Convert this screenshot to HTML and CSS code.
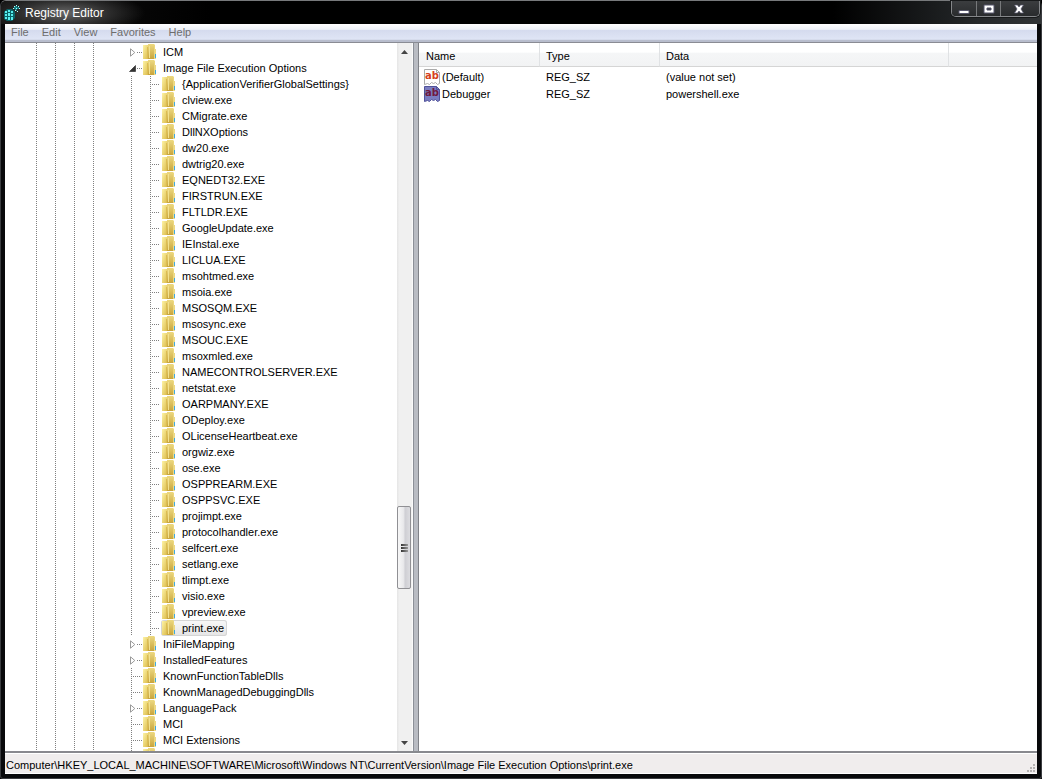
FILE: index.html
```html
<!DOCTYPE html>
<html lang="en">
<head>
<meta charset="utf-8">
<title>Registry Editor</title>
<link rel="stylesheet" href="styles.css">
</head>
<body>
<svg class="defs" aria-hidden="true">
  <defs>
    <linearGradient id="gold" x1="0" x2="1" y1="0" y2="1">
      <stop offset="0" stop-color="#fdf3a6"/><stop offset="1" stop-color="#dcbc4c"/>
    </linearGradient>
    <linearGradient id="goldDark" x1="0" x2="0" y1="0" y2="1">
      <stop offset="0" stop-color="#ead57c"/><stop offset="1" stop-color="#c9a53c"/>
    </linearGradient>
    <symbol id="folder" viewBox="0 0 14 16">
      <path d="M5 0h6l1 1v4h1v10H5z" fill="#ecd77c"/>
      <path d="M8 1h3v14H8z" fill="url(#goldDark)"/>
      <path d="M11 5h2v10h-2z" fill="#ecd883"/>
      <path d="M12 10h1v4h-1z" fill="#3fa9df"/>
      <path d="M0 1h5v14H0z" fill="url(#gold)"/>
      <path d="M4 3h1v12H4z" fill="#dcbd52"/>
      <path d="M5 1h3l1 1v13H5z" fill="url(#goldDark)"/>
      <path d="M6 2h1v12H6z" fill="#f3e28f"/>
    </symbol>
    <symbol id="closed" viewBox="0 0 7 9">
      <path d="M1.500.8v7.400L5.800 4.500z" fill="#fff" stroke="#999"/>
    </symbol>
    <symbol id="open" viewBox="0 0 7 9">
      <path d="M6.500 1.500v6h-6z" fill="#333" stroke="#222" stroke-width=".6"/>
    </symbol>
    <symbol id="page" viewBox="0 0 16 16">
      <path d="M.5.5h12l3 3v11l-2 1-2-2-2 1-2-1-2 2-2-1-3 1z"/>
      <path d="M12.500.5v3h3" fill="none"/>
    </symbol>
  </defs>
</svg>
<div class="window">
  <header class="titlebar">
    <svg class="app-icon" viewBox="0 0 16 16" aria-hidden="true">
      <path d="M0 7l3-3h5l3 3v6l-3 3H3l-3-2z" fill="#0a6468"/>
      <path d="M1 6h2v2H1zM4 5h2v2H4zM7 6h2v2H7zM1 9h2v2H1zM4 8h2v3H4zM7 9h2v2H7zM1 12h2v2H1zM4 12h2v3H4zM7 12h2v3H7z" fill="#59eef0"/>
      <path d="M11 1h2v1h2v2h-2v2h-2V4h-1V2h1z" fill="#138084"/>
      <path d="M10 1h1v1h-1zM12 0h1v1h-1zM14 1h1v1h-1zM9 3h1v1H9zM12 3h1v1h-1zM15 3h1v1h-1zM11 5h1v1h-1zM13 6h1v1h-1z" fill="#b5ffff"/>
    </svg>
    <h1 class="title">Registry Editor</h1>
    <div class="controls">
      <button class="control" aria-label="Minimize"><svg viewBox="0 0 12 12"><path d="M1 7.500h10v3H1z" fill="#fff" stroke="#55556a"/></svg></button>
      <button class="control" aria-label="Maximize"><svg viewBox="0 0 12 12"><path fill-rule="evenodd" d="M1 2h10v8H1zM4 5v2h4V5z" fill="#fff" stroke="#55556a"/></svg></button>
      <button class="control close" aria-label="Close"><svg viewBox="0 0 12 12"><path d="M1.500 2h3L6 4l1.500-2h3L8 6l2.500 4h-3L6 8l-1.500 2h-3L4 6z" fill="#fff" stroke="#55556a" stroke-width=".7"/></svg></button>
    </div>
  </header>
  <nav class="menu">
    <button>File</button><button>Edit</button><button>View</button><button>Favorites</button><button>Help</button>
  </nav>
  <main class="panes">
    <section class="tree-pane">
      <ul class="tree" id="tree"></ul>
      <div class="scrollbar">
        <button class="arrow" aria-label="Scroll up"><svg viewBox="0 0 7 4"><path d="M0 4l3.500-4L7 4z" fill="#444"/></svg></button>
        <div class="track"><div class="thumb"><i></i><i></i><i></i></div></div>
        <button class="arrow" aria-label="Scroll down"><svg viewBox="0 0 7 4"><path d="M0 0l3.500 4L7 0z" fill="#444"/></svg></button>
      </div>
    </section>
    <div class="splitter"></div>
    <section class="values-pane">
      <table class="values">
        <colgroup><col class="c-name"><col class="c-type"><col class="c-data"><col></colgroup>
        <thead><tr><th>Name</th><th>Type</th><th>Data</th><th></th></tr></thead>
        <tbody>
          <tr>
            <td><span class="value"><span class="ab"><svg aria-hidden="true"><use href="#page"/></svg><b>ab</b></span>(Default)</span></td>
            <td>REG_SZ</td><td>(value not set)</td><td></td>
          </tr>
          <tr>
            <td><span class="value"><span class="ab selected"><svg aria-hidden="true"><use href="#page"/></svg><b>ab</b></span>Debugger</span></td>
            <td>REG_SZ</td><td>powershell.exe</td><td></td>
          </tr>
        </tbody>
      </table>
    </section>
  </main>
  <footer class="status">
    <span>Computer\HKEY_LOCAL_MACHINE\SOFTWARE\Microsoft\Windows NT\CurrentVersion\Image File Execution Options\print.exe</span>
    <svg class="grip" viewBox="0 0 9 9" aria-hidden="true"><path d="M6 0h2v2H6zM3 3h2v2H3zM6 3h2v2H6zM0 6h2v2H0zM3 6h2v2H3zM6 6h2v2H6z" fill="#b5b2b2"/></svg>
  </footer>
</div>
<script src="tree.js"></script>
</body>
</html>
```
FILE: styles.css
```css
* { box-sizing: border-box; }
body {
  margin: 0;
  font: 11px/16px "Liberation Sans", Arial, sans-serif;
  color: #000;
  background: #000;
}
button { font: inherit; border: 0; padding: 0; background: none; }
.defs { position: absolute; width: 0; height: 0; }
.window {
  display: flex;
  flex-direction: column;
  height: 100vh;
  padding: 0 4px 4px;
  background: #08090b;
  border: 1px solid #3b3d40;
  border-top-color: #77797b;
  border-radius: 6px 6px 3px 3px;
}
.titlebar {
  display: flex;
  flex: 0 0 23px;
  align-items: center;
  margin: 0 -4px;
  padding-left: 3px;
  background: radial-gradient(ellipse 80px 22px at 64px 12px, #666 0, #44444499 55%, transparent 100%), linear-gradient(90deg, #111, #000 20%, #000 80%, #25282a 94%, #303335);
  border-radius: 5px 5px 0 0;
}
.app-icon { width: 16px; height: 16px; margin-right: 5px; }
.title { margin: 0; font-size: 12px; font-weight: 400; color: #fff; }
.controls {
  display: flex;
  align-self: flex-start;
  margin-left: auto;
  margin-right: 1px;
  border: 1px solid #85878a;
  border-top: 0;
  border-radius: 0 0 5px 5px;
  box-shadow: 0 0 0 1px #17191a;
}
.control {
  display: flex;
  align-items: center;
  justify-content: center;
  width: 24px;
  height: 15px;
  background: linear-gradient(#3b3d3f, #292b2d);
  border-left: 1px solid #77797b;
}
.control:first-child { border-left: 0; border-radius: 0 0 0 4px; }
.control.close { width: 39px; padding-right: 3px; border-radius: 0 0 4px 0; }
.control svg { width: 12px; height: 12px; }
.menu {
  display: flex;
  flex: 0 0 19px;
  gap: 1px;
  padding: 0 0 2px;
  background: linear-gradient(#fff 0, #eff2f9 30%, #d5dbee 35%, #dfe5f5 85%, #b8bdcd 90%);
  border-bottom: 1px solid #8a8c94;
}
.menu button { padding: 0 6px; line-height: 16px; color: #6d6d6d; }
.panes { display: flex; flex: 1; min-height: 0; background: #fff; }
.tree-pane { display: flex; flex: 0 0 409px; min-width: 0; border-right: 1px solid #8c9098; }
.tree {
  --dots: linear-gradient(#808080 50%, transparent 50%);
  flex: 1;
  margin: 0;
  padding: 1px 0 0;
  overflow: hidden;
  list-style: none;
  background: var(--dots) 31px 0 / 1px 2px repeat-y, var(--dots) 50px 0 / 1px 2px repeat-y,
    var(--dots) 69px 0 / 1px 2px repeat-y, var(--dots) 88px 0 / 1px 2px repeat-y;
}
.tree ul { margin: 0; padding: 0; list-style: none; }
.row {
  display: grid;
  grid-template-columns: 7px 5px 14px auto;
  align-items: center;
  justify-content: start;
  height: 16px;
  padding-left: 124px;
  column-gap: 1px;
  white-space: nowrap;
}
.row .toggle { width: 7px; height: 9px; }
.row .folder { width: 14px; height: 16px; }
.row .stub { height: 1px; background: repeating-linear-gradient(90deg, #808080 0 1px, transparent 1px 2px); }
.row .label { padding: 0 3px 0 5px; }
.row.leaf {
  grid-template-columns: 11px 14px auto;
  padding-left: 126px;
  background: var(--dots) 126px 0 / 1px 2px repeat-y;
}
.children { background: var(--dots) 126px 0 / 1px 2px repeat-y; }
.children .row {
  grid-template-columns: 10px auto;
  padding-left: 145px;
  background: var(--dots) 145px 0 / 1px 2px repeat-y;
}
.item { display: flex; height: 16px; padding: 0 2px 0 1px; }
.item.selected {
  background: linear-gradient(#f8f8f8, #e5e5e5);
  border-radius: 3px;
  box-shadow: inset 0 0 0 1px #d5d5d5;
}
.item .label { padding: 0 1px 0 6px; }
.scrollbar {
  display: flex;
  flex: 0 0 16px;
  flex-direction: column;
  background: linear-gradient(90deg, #e5e5e5, #f0f0f0 15%, #f0f0f0 90%, #fff);
}
.arrow { display: flex; flex: 0 0 17px; align-items: center; justify-content: center; padding-right: 2px; }
.arrow svg { width: 7px; height: 4px; }
.track { display: flex; flex: 1; flex-direction: column; }
.track::before { content: ""; flex: 446; }
.track::after { content: ""; flex: 145; }
.thumb {
  display: flex;
  flex: 81;
  flex-direction: column;
  align-items: center;
  justify-content: center;
  gap: 1px;
  width: 14px;
  background: linear-gradient(90deg, #f7f7f7, #e9e9eb 45%, #cfcfd4 60%, #dcdce0);
  border: 1px solid #909094;
  border-radius: 2px;
}
.thumb i { width: 7px; height: 2px; background: linear-gradient(90deg, #333, #999); }
.splitter { flex: 0 0 4px; background: #b9bcc3; }
.values-pane { flex: 1; min-width: 0; border-left: 1px solid #808288; }
.values { width: 100%; table-layout: fixed; border-collapse: separate; border-spacing: 0; }
.c-name { width: 121px; }
.c-type { width: 120px; }
.c-data { width: 289px; }
.values th {
  height: 24px;
  padding: 2px 6px 0;
  font-weight: 400;
  text-align: left;
  background: linear-gradient(#fff 40%, #f5f6f7 44%, #f2f3f4);
  border-right: 1px solid #e0e2e4;
  border-bottom: 1px solid #d5d5d5;
}
.values th:first-child { padding-left: 7px; }
.values th:last-child { border-right: 0; }
.values tbody::before { content: ""; display: block; height: 1px; }
.values td { height: 17px; padding: 0 6px; }
.values td:first-child { padding-left: 5px; }
.value { display: flex; gap: 2px; }
.ab { display: grid; width: 16px; height: 16px; font-family: "DejaVu Sans", sans-serif; font-size: 10px; line-height: 14px; color: #d5401d; }
.ab svg, .ab b { grid-area: 1 / 1; }
.ab svg { width: 16px; height: 16px; fill: #fff; stroke: #aaa; }
.ab b { text-align: center; }
.ab.selected { color: #71183f; }
.ab.selected svg { fill: #7a7cc0; stroke: #50529a; }
.status {
  display: flex;
  flex: 0 0 23px;
  align-items: center;
  justify-content: space-between;
  padding: 3px 1px 0;
  background: #f0eded;
  border-top: 2px solid #88898e;
  border-bottom: 1px solid #fff;
  box-shadow: inset 0 1px #fff;
  white-space: nowrap;
}
.grip { align-self: flex-end; width: 9px; height: 9px; }
```
FILE: tree.js
```js
const subkeys = ["{ApplicationVerifierGlobalSettings}", "clview.exe", "CMigrate.exe", "DllNXOptions", "dw20.exe",
  "dwtrig20.exe", "EQNEDT32.EXE", "FIRSTRUN.EXE", "FLTLDR.EXE", "GoogleUpdate.exe", "IEInstal.exe", "LICLUA.EXE",
  "msohtmed.exe", "msoia.exe", "MSOSQM.EXE", "msosync.exe", "MSOUC.EXE", "msoxmled.exe", "NAMECONTROLSERVER.EXE",
  "netstat.exe", "OARPMANY.EXE", "ODeploy.exe", "OLicenseHeartbeat.exe", "orgwiz.exe", "ose.exe", "OSPPREARM.EXE",
  "OSPPSVC.EXE", "projimpt.exe", "protocolhandler.exe", "selfcert.exe", "setlang.exe", "tlimpt.exe", "visio.exe",
  "vpreview.exe", "print.exe"];
const keys = [
  { name: "ICM", state: "closed" },
  { name: "Image File Execution Options", state: "open", children: subkeys },
  { name: "IniFileMapping", state: "closed" },
  { name: "InstalledFeatures", state: "closed" },
  { name: "KnownFunctionTableDlls" },
  { name: "KnownManagedDebuggingDlls" },
  { name: "LanguagePack", state: "closed" },
  { name: "MCI" },
  { name: "MCI Extensions" },
  { name: "" }
];
const folder = '<svg class="folder" aria-hidden="true"><use href="#folder"/></svg>';
const child = name => `<li><div class="row"><span class="stub"></span><span class="item${name === "print.exe" ? " selected" : ""}">${folder}<span class="label">${name}</span></span></div></li>`;
document.getElementById("tree").innerHTML = keys.map(key => {
  const toggle = key.state ? `<svg class="toggle" aria-hidden="true"><use href="#${key.state}"/></svg>` : "";
  const nested = key.children ? `<ul class="children">${key.children.map(child).join("")}</ul>` : "";
  return `<li><div class="row${key.state ? "" : " leaf"}">${toggle}<span class="stub"></span>${folder}<span class="label">${key.name}</span></div>${nested}</li>`;
}).join("");
```
